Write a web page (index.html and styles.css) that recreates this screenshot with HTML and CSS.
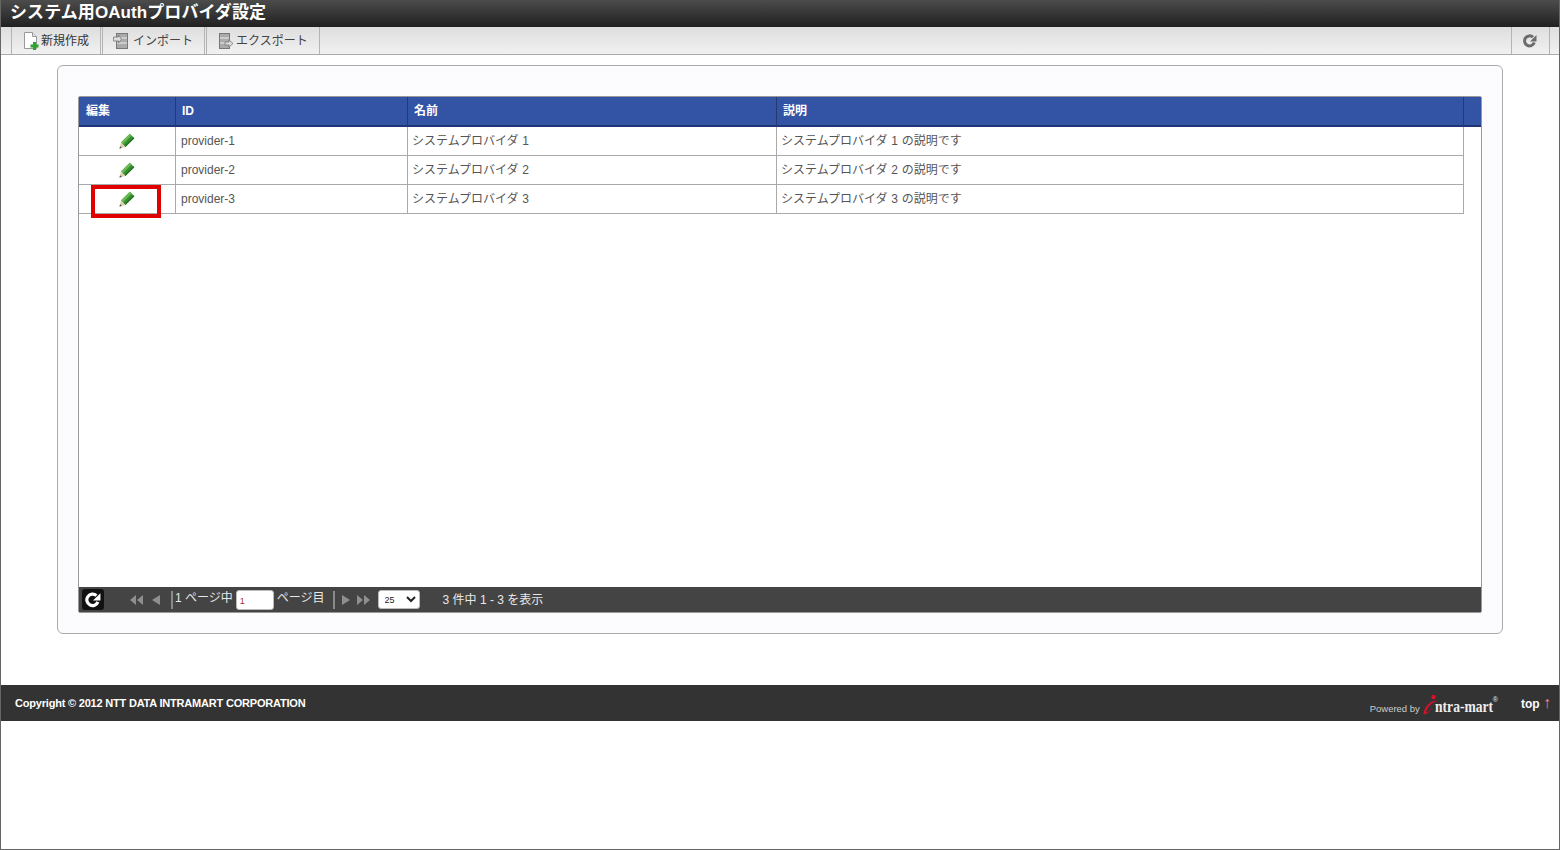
FILE: index.html
```html
<!DOCTYPE html>
<html lang="ja">
<head>
<meta charset="utf-8">
<title>システム用OAuthプロバイダ設定</title>
<link rel="stylesheet" href="styles.css">
</head>
<body>
<div class="frame">
  <h1 class="title">システム用OAuthプロバイダ設定</h1>
  <div class="toolbar">
    <div class="tool tool-new">
      <svg width="16" height="18" viewBox="0 0 16 18"><path d="M1.500.500h8l4 4v12h-12z" fill="#fff" stroke="#9a9a9a"/><path d="M9.500.500v4h4" fill="#e4e4e4" stroke="#9a9a9a"/><path d="M10 10h3v2.500h2.500v3H13V18h-3v-2.500H7.500v-3H10z" fill="#2fa32f"/></svg>
      <span>新規作成</span>
    </div>
    <div class="tool tool-import">
      <svg width="16" height="18" viewBox="0 0 16 18"><rect x="3.500" y="1.500" width="11" height="15" fill="#aaa" stroke="#777"/><path d="M4 6h10M4 11h10" stroke="#eee"/><path d="M.5 5h5V3l3 4-3 4V9h-5z" fill="#ddd" stroke="#777" stroke-width=".8"/></svg>
      <span>インポート</span>
    </div>
    <div class="tool tool-export">
      <svg width="16" height="18" viewBox="0 0 16 18"><rect x="1.500" y="1.500" width="10" height="15" fill="#aaa" stroke="#777"/><path d="M2 6h9M2 11h9" stroke="#eee"/><path d="M7 10h4V8l4 3.500-4 3.500v-2H7z" fill="#ddd" stroke="#777" stroke-width=".8"/></svg>
      <span>エクスポート</span>
    </div>
    <div class="tool-spacer"></div>
    <div class="tool tool-reload">
      <svg width="14" height="14" viewBox="0 0 14 14"><path d="M11.300 8.600A5 5 0 1 1 10 3.200" fill="none" stroke="#6c6c6c" stroke-width="3"/><path d="M13.500 1v6.500H7z" fill="#6c6c6c"/></svg>
    </div>
  </div>
  <main class="main">
    <section class="card">
      <div class="grid">
        <div class="grid-body">
        <table class="table">
          <thead>
            <tr>
              <th class="col-edit">編集</th>
              <th class="col-id">ID</th>
              <th class="col-name">名前</th>
              <th class="col-desc">説明</th>
              <th class="col-scroll"></th>
            </tr>
          </thead>
          <tbody>
            <tr>
              <td class="edit"><svg class="pencil" width="16" height="16" viewBox="0 0 16 16"><path d="M2 9.500 10.800 .8 15.300 5.200 6.400 14z" fill="#379231"/><path d="M2 9.500 10.800 .8 12.500 2.500 3.800 11.200z" fill="#6cbb54"/><path d="M6.400 14 15.300 5.200 14.300 4.200 5.400 13z" fill="#256f22"/><path d="M2 9.500 6.400 14 .5 15.500z" fill="#dccfae"/><path d="M.5 15.500l.6-2.300 1.700 1.800z" fill="#444"/></svg></td>
              <td class="id">provider-1</td><td>システムプロバイダ 1</td><td>システムプロバイダ 1 の説明です</td>
            </tr>
            <tr>
              <td class="edit"><svg class="pencil" width="16" height="16" viewBox="0 0 16 16"><path d="M2 9.500 10.800 .8 15.300 5.200 6.400 14z" fill="#379231"/><path d="M2 9.500 10.800 .8 12.500 2.500 3.800 11.200z" fill="#6cbb54"/><path d="M6.400 14 15.300 5.200 14.300 4.200 5.400 13z" fill="#256f22"/><path d="M2 9.500 6.400 14 .5 15.500z" fill="#dccfae"/><path d="M.5 15.500l.6-2.300 1.700 1.800z" fill="#444"/></svg></td>
              <td class="id">provider-2</td><td>システムプロバイダ 2</td><td>システムプロバイダ 2 の説明です</td>
            </tr>
            <tr>
              <td class="edit"><svg class="pencil" width="16" height="16" viewBox="0 0 16 16"><path d="M2 9.500 10.800 .8 15.300 5.200 6.400 14z" fill="#379231"/><path d="M2 9.500 10.800 .8 12.500 2.500 3.800 11.200z" fill="#6cbb54"/><path d="M6.400 14 15.300 5.200 14.300 4.200 5.400 13z" fill="#256f22"/><path d="M2 9.500 6.400 14 .5 15.500z" fill="#dccfae"/><path d="M.5 15.500l.6-2.300 1.700 1.800z" fill="#444"/></svg><span class="highlight"></span></td>
              <td class="id">provider-3</td><td>システムプロバイダ 3</td><td>システムプロバイダ 3 の説明です</td>
            </tr>
          </tbody>
        </table>
        </div>
        <div class="pager">
          <span class="pager-reload"><svg width="16" height="16" viewBox="0 0 14 14"><path d="M11.300 8.600A5 5 0 1 1 10 3.200" fill="none" stroke="#fff" stroke-width="2.800"/><path d="M13.500 1v6.500H7z" fill="#fff"/></svg></span>
          <svg class="nav-first" width="32" height="12" viewBox="0 0 32 12"><path d="M7 1v10L1 6zM14 1v10L8 6zM31 1v10l-8-5z" fill="#8f8f8f"/></svg>
          <span class="sep sep-first"></span>
          <span class="pager-text">1 ページ中</span>
          <input class="page-input" type="text" value="1">
          <span class="pager-text">ページ目</span>
          <span class="sep"></span>
          <svg class="nav-next" width="30" height="12" viewBox="0 0 30 12"><path d="M1 1v10l8-5zM16 1v10l6-5zM23 1v10l6-5z" fill="#8f8f8f"/></svg>
          <select class="page-size"><option>25</option></select>
          <span class="pager-count">3 件中 1 - 3 を表示</span>
        </div>
      </div>
    </section>
  </main>
  <footer class="footer">
    <span class="copy">Copyright © 2012 NTT DATA INTRAMART CORPORATION</span>
    <span class="powered">Powered by</span>
    <span class="logo"><svg class="logo-mark" width="16" height="22" viewBox="0 0 16 22"><circle cx="10.500" cy="3" r="2.200" fill="#d8112a"/><path d="M14.500 7C8 5.500 1 13 .5 20c3.500 1 7-3 8.500-8-1.500 3.500-3.500 6.500-6 6.500 1-5 6-10.500 11.500-11.500z" fill="#d8112a"/></svg><span class="logo-text">ntra-mart</span><sup class="logo-reg">®</sup></span>
    <span class="top">top <b class="arrow">↑</b></span>
  </footer>
</div>
</body>
</html>
```
FILE: styles.css
```css
* { box-sizing: border-box; }
html, body { margin: 0; height: 100%; }
body {
  font-family: "Liberation Sans", "Noto Sans CJK JP", sans-serif;
  font-size: 12px;
  color: #444;
  background: #fff;
}
.frame {
  height: 850px;
  border: 1px solid #666;
  border-top: 0;
  overflow: hidden;
}
.title {
  margin: 0;
  height: 27px;
  padding: 2px 0 0 9px;
  font-size: 17px;
  line-height: 22px;
  font-weight: 700;
  letter-spacing: .08px;
  color: #fff;
  background: linear-gradient(#4c4c4c, #202020);
}
.toolbar {
  display: flex;
  height: 28px;
  padding-left: 10px;
  background: linear-gradient(#dedede, #f1f1f1);
  border-bottom: 1px solid #aaa;
}
.tool {
  display: flex;
  align-items: center;
  height: 27px;
  padding-top: 1px;
  border-left: 1px solid #b4b4b4;
  border-right: 1px solid #b4b4b4;
  margin-right: 1px;
  font-size: 12px;
  line-height: 14px;
  color: #444;
}
.tool-new { width: 90px; padding-left: 11px; gap: 2px; }
.tool-import { width: 103px; padding-left: 10px; gap: 4px; }
.tool-export { width: 114px; padding-left: 11px; gap: 2px; }
.tool-new span { color: #333; }
.tool-spacer { flex: 1; }
.tool-reload {
  width: 39px;
  margin-right: 9px;
  padding-right: 2px;
  justify-content: center;
}
.main { padding: 10px 56px 0; }
.card {
  height: 569px;
  padding: 30px 20px 20px;
  background: #fcfcfe;
  border: 1px solid #aaa;
  border-radius: 6px;
}
.grid {
  display: flex;
  flex-direction: column;
  height: 517px;
  background: #fff;
  border: 1px solid #999;
  border-radius: 2px;
}
.grid-body { flex: 1; }
.table {
  width: 100%;
  border-collapse: separate;
  border-spacing: 0;
  table-layout: fixed;
}
.table th {
  height: 30px;
  padding: 0 0 0 6px;
  text-align: left;
  font-size: 12px;
  line-height: 14px;
  font-weight: 700;
  color: #fff;
  background: #3353a5;
  border-right: 1px solid #24396f;
  border-bottom: 2px solid #1f3576;
}
.table th.col-edit { width: 97px; padding-left: 7px; }
.col-id { width: 232px; }
.col-name { width: 369px; }
.col-desc { width: 687px; }
.table th.col-scroll { width: 17px; border-right: 0; padding: 0; }
.table td {
  height: 29px;
  padding: 0 0 0 4px;
  font-size: 12px;
  line-height: 14px;
  word-spacing: .5px;
  color: #555;
  border-right: 1px solid #aaa;
  border-bottom: 1px solid #aaa;
  background: #fff;
}
.table td.id { padding-left: 5px; }
.table td.edit { position: relative; padding: 0; text-align: center; }
.pencil { display: inline-block; vertical-align: middle; }
.highlight {
  position: absolute;
  left: 12px;
  top: 0;
  width: 70px;
  height: 33px;
  border: 4px solid #e00000;
}
.pager {
  display: flex;
  align-items: center;
  height: 25px;
  padding-left: 3px;
  background: #444;
  color: #e8e8e8;
  font-size: 12px;
  line-height: 14px;
}
.pager-reload {
  display: flex;
  align-items: center;
  justify-content: center;
  width: 22px;
  height: 21px;
  background: #111;
  border-radius: 3px;
}
.nav-first { margin-left: 25px; }
.sep {
  width: 2px;
  height: 18px;
  margin: 0 2px 0 8px;
  background: #8a8a8a;
}
.sep-first { margin-left: 10px; }
.pager-text { position: relative; top: -2px; }
.page-input {
  width: 38px;
  height: 20px;
  margin: 0 3px;
  padding: 2px 3px 0;
  border: 1px solid #bbb;
  border-radius: 3px;
  font: 9px "Liberation Sans", sans-serif;
  color: #a33;
}
.nav-next { margin-left: 4px; }
.page-size {
  width: 42px;
  height: 19px;
  margin-left: 7px;
  padding: 0 0 0 2px;
  border: 1px solid #bbb;
  border-radius: 3px;
  background-color: #fff;
  font: 9px "Liberation Sans", sans-serif;
  color: #222;
}
.pager-count { margin-left: 23px; }
.footer {
  display: flex;
  align-items: center;
  height: 36px;
  margin-top: 51px;
  padding: 0 8px 0 14px;
  background: #333;
  color: #fff;
}
.copy { font-weight: 700; font-size: 11px; letter-spacing: -.2px; white-space: nowrap; }
.powered { margin-left: auto; margin-top: 10px; font-size: 9.500px; color: #ccc; white-space: nowrap; }
.logo { display: flex; align-items: flex-end; margin: 3px 23px 0 3px; height: 24px; white-space: nowrap; }
.logo-mark { margin-bottom: 1px; margin-right: -4px; flex: none; }
.logo-text { font-family: "Liberation Serif", serif; font-size: 17px; font-weight: 700; color: #eee; line-height: 20px; transform: scaleX(.8); transform-origin: left; width: 58px; white-space: nowrap; }
.logo-reg { font-size: 7px; line-height: 8px; color: #eee; align-self: flex-start; margin: 3px 0 0 0; }
.top { font-weight: 700; font-size: 12px; margin-top: -1px; white-space: nowrap; }
.arrow { color: #ff8080; font-size: 16px; font-weight: 700; }
```
